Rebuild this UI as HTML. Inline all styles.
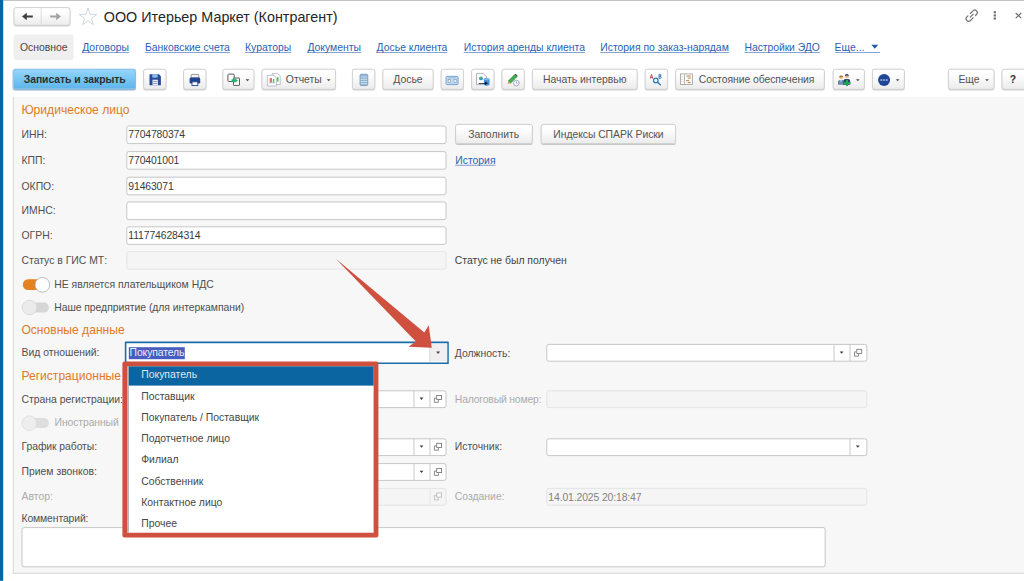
<!DOCTYPE html>
<html lang="ru">
<head>
<meta charset="utf-8">
<title>ООО Итерьер Маркет (Контрагент)</title>
<style>
html,body{margin:0;padding:0;}
body{width:1024px;height:581px;overflow:hidden;background:#fff;position:relative;font-family:"Liberation Sans",sans-serif;font-size:13px;color:#4a4a4a;}
#root{position:absolute;left:0;top:0;width:1280px;height:726.25px;transform:scale(0.8);transform-origin:0 0;}
.abs{position:absolute;white-space:nowrap;}
#stripe{left:0;top:0;width:4.125px;height:726.25px;background:#0b65a1;}
#topline{left:0;top:0;width:1280px;height:1.25px;background:#b4b4b4;}
#title{left:129.75px;top:10.5px;font-size:17.938px;color:#262626;line-height:22.5px;}
.btn{position:absolute;box-sizing:border-box;border:1.25px solid #c3c3c3;border-radius:3.125px;background:linear-gradient(#ffffff 20%,#ececec);box-shadow:0 1.125px 0.625px rgba(0,0,0,.2);text-align:center;white-space:nowrap;color:#535353;font-size:13px;}
.tb{top:85.75px;height:26.5px;line-height:26.25px;}
.tab{top:51.5px;font-size:13px;line-height:16.25px;color:#2c5fb4;text-decoration:underline;text-decoration-thickness:1px;text-underline-offset:1px;text-decoration-skip-ink:none;text-decoration-color:rgba(44,95,180,.72);}
#panel{left:15.875px;top:121.375px;width:1275px;height:595.625px;background:#f7f7f7;border:1.375px solid #d0d0d0;border-top:none;box-sizing:border-box;}
.lbl{font-size:13px;line-height:16.25px;color:#4f4f4f;}
.dis{color:#ababab;}
.hdr{font-size:15.125px;line-height:18.75px;color:#df7a22;}
.inp{position:absolute;box-sizing:border-box;border:1.25px solid #b9b9b9;border-radius:3px;background:#fff;font-size:13px;line-height:22.75px;color:#3a3a3a;padding-left:1.5px;white-space:nowrap;overflow:hidden;letter-spacing:-0.15px;}
.inpd{background:#f5f5f5;border-color:#dfdfdf;color:#828282;}
.h{height:22.875px;}
.link{color:#2c5fb4;text-decoration:underline;text-decoration-thickness:1px;text-underline-offset:1px;text-decoration-skip-ink:none;text-decoration-color:rgba(44,95,180,.72);}
.item{position:absolute;left:176.5px;font-size:13px;line-height:16.25px;color:#464646;white-space:nowrap;}
.sep{position:absolute;width:1.25px;background:#bcbcbc;}
</style>
</head>
<body>
<div id="root">
<div class="abs" id="topline"></div>
<div class="abs" id="stripe"></div>

<!-- header -->
<div class="btn" style="left:16.5px;top:9px;width:71px;height:22.75px;"></div>
<div class="abs" style="left:51.125px;top:10.25px;width:1.25px;height:20.25px;background:#d6d6d6;"></div>
<div class="abs" id="title">ООО Итерьер Маркет (Контрагент)</div>

<!-- tabs -->
<div class="abs" style="left:16.5px;top:42.75px;width:75.75px;height:31.75px;background:#efefef;border-radius:3.125px;"></div>
<div class="abs tab" style="left:25px;color:#474747;text-decoration:none;">Основное</div>
<div class="abs tab" style="left:102.75px;">Договоры</div>
<div class="abs tab" style="left:181.25px;">Банковские счета</div>
<div class="abs tab" style="left:306.25px;">Кураторы</div>
<div class="abs tab" style="left:384.25px;">Документы</div>
<div class="abs tab" style="left:470.75px;">Досье клиента</div>
<div class="abs tab" style="left:579.625px;">История аренды клиента</div>
<div class="abs tab" style="left:750.25px;">История по заказ-нарядам</div>
<div class="abs tab" style="left:930.625px;"><span style="letter-spacing:-0.088px">Настройки ЭДО</span></div>
<div class="abs tab" style="left:1043.25px;text-decoration:none;">Еще...</div>
<div class="abs" style="left:1043.5px;top:65px;width:56.75px;height:1px;background:rgba(44,95,180,.72);"></div>

<!-- toolbar -->
<div class="btn tb" style="left:16.375px;width:154px;background:linear-gradient(#93d6fc,#5db4ea);border-color:#5fa6d6;box-shadow:0 1.125px 0.625px rgba(20,70,120,.45);color:#2e2e2e;font-weight:bold;"><span style="letter-spacing:-0.075px">Записать и закрыть</span></div>
<div class="btn tb" style="left:179.125px;width:29.25px;"></div>
<div class="btn tb" style="left:228.5px;width:29.25px;"></div>
<div class="btn tb" style="left:277.875px;width:40.25px;"></div>
<div class="btn tb" style="left:327px;width:93px;text-align:left;padding-left:29.25px;">Отчеты</div>
<div class="btn tb" style="left:439.875px;width:29.25px;"></div>
<div class="btn tb" style="left:478px;width:63.875px;">Досье</div>
<div class="btn tb" style="left:550.625px;width:29.25px;"></div>
<div class="btn tb" style="left:588.875px;width:29.25px;"></div>
<div class="btn tb" style="left:626.75px;width:29.25px;"></div>
<div class="btn tb" style="left:665.25px;width:131.375px;">Начать интервью</div>
<div class="btn tb" style="left:805.75px;width:29px;"></div>
<div class="btn tb" style="left:843.875px;width:187.5px;text-align:left;padding-left:28.625px;"><span style="letter-spacing:-0.075px">Состояние обеспечения</span></div>
<div class="btn tb" style="left:1040.5px;width:40.75px;"></div>
<div class="btn tb" style="left:1090.25px;width:40.75px;"></div>
<div class="btn tb" style="left:1185px;width:58px;text-align:left;padding-left:12px;">Еще</div>
<div class="btn tb" style="left:1252px;width:37.5px;text-align:left;padding-left:9.25px;font-weight:bold;color:#333;">?</div>

<!-- form panel -->
<div class="abs" id="panel"></div>

<div class="abs hdr" style="left:26.75px;top:129.125px;">Юридическое лицо</div>

<div class="abs lbl" style="left:26.875px;top:160.75px;">ИНН:</div>
<div class="inp h" style="left:157.875px;top:156.625px;width:400.5px;">7704780374</div>
<div class="btn" style="left:568.5px;top:154.875px;width:97.25px;height:25.25px;line-height:23px;">Заполнить</div>
<div class="btn" style="left:676px;top:154.875px;width:169.125px;height:25.25px;line-height:23px;letter-spacing:-0.075px;">Индексы СПАРК Риски</div>

<div class="abs lbl" style="left:26.875px;top:193.25px;">КПП:</div>
<div class="inp h" style="left:157.875px;top:189.25px;width:400.5px;">770401001</div>
<div class="abs lbl link" style="left:569px;top:193.25px;">История</div>

<div class="abs lbl" style="left:26.875px;top:224.75px;">ОКПО:</div>
<div class="inp h" style="left:157.875px;top:220.75px;width:400.5px;">91463071</div>

<div class="abs lbl" style="left:26.875px;top:255.75px;">ИМНС:</div>
<div class="inp h" style="left:157.875px;top:251.75px;width:400.5px;"></div>

<div class="abs lbl" style="left:26.875px;top:287.25px;">ОГРН:</div>
<div class="inp h" style="left:157.875px;top:283.25px;width:400.5px;">1117746284314</div>

<div class="abs lbl" style="left:26.875px;top:318.25px;">Статус в ГИС МТ:</div>
<div class="inp inpd h" style="left:157.875px;top:314.25px;width:400.5px;"></div>
<div class="abs lbl" style="left:568.5px;top:318.25px;color:#424242;">Статус не был получен</div>

<!-- toggles -->
<div class="abs lbl" style="left:67.75px;top:348px;">НЕ является плательщиком НДС</div>

<div class="abs lbl" style="left:67.75px;top:376.75px;"><span style="letter-spacing:-0.056px">Наше предприятие (для интеркампани)</span></div>

<div class="abs hdr" style="left:26.75px;top:403.875px;">Основные данные</div>

<div class="abs lbl" style="left:26.875px;top:433.375px;">Вид отношений:</div>
<div class="inp" style="left:155.875px;top:427.125px;width:404.875px;height:27.375px;border:2.375px solid #1b6da7;border-radius:0.75px;padding-left:0;"></div>
<div class="abs" style="left:536.875px;top:429.875px;width:1.375px;height:22.5px;background:#b9b9b9;"></div>
<div class="abs" style="left:538.25px;top:429.875px;width:20.375px;height:22.5px;background:#efefef;"></div>
<div class="abs" style="left:161.25px;top:433.75px;width:69.5px;height:15.375px;background:#465ec0;"></div>
<div class="abs lbl" style="left:161.875px;top:433.375px;color:rgba(255,255,255,.9);letter-spacing:-0.125px;">Покупатель</div>

<div class="abs lbl" style="left:568.5px;top:433.625px;">Должность:</div>
<div class="inp h" style="left:682.875px;top:430px;width:400.75px;height:22.25px;"></div>
<div class="sep" style="left:1041.75px;top:431.25px;height:19.75px;"></div>
<div class="sep" style="left:1062px;top:431.25px;height:19.75px;"></div>

<div class="abs hdr" style="left:26.75px;top:461.125px;">Регистрационные</div>

<div class="abs lbl" style="left:26.875px;top:491.5px;">Страна регистрации:</div>
<div class="inp h" style="left:157.875px;top:487.75px;width:400.5px;height:22.25px;"></div>
<div class="sep" style="left:516.625px;top:489px;height:19.75px;"></div>
<div class="sep" style="left:537px;top:489px;height:19.75px;"></div>
<div class="abs lbl dis" style="left:568.5px;top:491.5px;"><span style="letter-spacing:-0.225px">Налоговый номер:</span></div>
<div class="inp inpd h" style="left:682.875px;top:487.75px;width:400.75px;height:22.25px;"></div>

<div class="abs lbl dis" style="left:68.25px;top:520.5px;letter-spacing:-0.15px;">Иностранный</div>

<div class="abs lbl" style="left:26.875px;top:551.375px;"><span style="letter-spacing:-0.1px">График работы:</span></div>
<div class="inp h" style="left:157.875px;top:547.625px;width:400.5px;height:22.25px;"></div>
<div class="sep" style="left:516.625px;top:548.875px;height:19.75px;"></div>
<div class="sep" style="left:537px;top:548.875px;height:19.75px;"></div>
<div class="abs lbl" style="left:568.5px;top:551.375px;">Источник:</div>
<div class="inp h" style="left:682.875px;top:547.625px;width:400.75px;height:22.25px;"></div>
<div class="sep" style="left:1062px;top:548.875px;height:19.75px;"></div>

<div class="abs lbl" style="left:26.875px;top:582px;">Прием звонков:</div>
<div class="inp h" style="left:157.875px;top:579.125px;width:400.5px;height:22.25px;"></div>
<div class="sep" style="left:516.625px;top:580.375px;height:19.75px;"></div>
<div class="sep" style="left:537px;top:580.375px;height:19.75px;"></div>

<div class="abs lbl dis" style="left:26.875px;top:613.25px;">Автор:</div>
<div class="inp inpd h" style="left:157.875px;top:609.75px;width:400.5px;height:22.5px;"></div>
<div class="sep" style="left:537px;top:611px;height:20px;background:#e0e0e0;"></div>
<div class="abs lbl dis" style="left:568.5px;top:613.25px;">Создание:</div>
<div class="inp inpd h" style="left:682.875px;top:609.75px;width:400.75px;height:22.5px;line-height:22.75px;">14.01.2025 20:18:47</div>

<div class="abs lbl" style="left:26.875px;top:641.125px;"><span style="letter-spacing:-0.163px">Комментарий:</span></div>
<div class="inp" style="left:26.875px;top:658.75px;width:1005.25px;height:50.25px;"></div>

<!-- dropdown list -->
<div class="abs" style="left:152.875px;top:452.125px;width:320.25px;height:220.25px;box-sizing:border-box;border:6.125px solid #d0503f;border-radius:2.5px;background:#fff;"></div>
<div class="abs" style="left:159.25px;top:458.25px;width:1.5px;height:208px;background:#a9a9a9;"></div>
<div class="abs" style="left:160.75px;top:458.25px;width:306.25px;height:24px;background:#0b65a1;"></div>
<div class="item" style="top:461px;color:rgba(255,255,255,.88);">Покупатель</div>
<div class="item" style="top:487.5px;">Поставщик</div>
<div class="item" style="top:514px;">Покупатель / Поставщик</div>
<div class="item" style="top:540.5px;">Подотчетное лицо</div>
<div class="item" style="top:567px;">Филиал</div>
<div class="item" style="top:593.5px;">Собственник</div>
<div class="item" style="top:620px;">Контактное лицо</div>
<div class="item" style="top:646.5px;">Прочее</div>

<!-- ICONS + red arrow (page-space SVG overlay) -->
<svg class="abs" id="ov" style="left:0;top:0;width:1280px;height:726.25px;pointer-events:none" viewBox="0 0 1024 581">
<!--ICONS-->
  <!-- toggles -->
  <rect x="22.8" y="279.3" width="26" height="10.7" rx="5.35" fill="#e5811f"/>
  <circle cx="42.4" cy="284.8" r="7.35" fill="#fff" stroke="#a7adab" stroke-width="0.8"/>
  <rect x="23" y="302.6" width="25.9" height="10" rx="5" fill="#d6d6d6"/>
  <circle cx="29.55" cy="307.5" r="7.3" fill="#ebebeb" stroke="#d5d5d5" stroke-width="0.8"/>
  <rect x="23" y="418.1" width="25.9" height="9.9" rx="4.95" fill="#dedede"/>
  <circle cx="29.3" cy="423.2" r="7.3" fill="#eeeeee" stroke="#dcdcdc" stroke-width="0.8"/>
  <!-- nav arrows -->
  <path d="M22 16.5 L26.8 12.7 L26.8 15.6 L32.8 15.6 L32.8 17.5 L26.8 17.5 L26.8 20.3 Z" fill="#3f3f3f"/>
  <path d="M61 16.5 L56.2 12.7 L56.2 15.6 L50.2 15.6 L50.2 17.5 L56.2 17.5 L56.2 20.3 Z" fill="#a3a3a3"/>
  <!-- star -->
  <path d="M88 8.1 L90.15 14.3 L96.9 14.4 L91.5 18.4 L93.5 24.7 L88 20.9 L82.5 24.7 L84.5 18.4 L79.1 14.4 L85.85 14.3 Z" fill="#fff" stroke="#c6cdd7" stroke-width="0.85" stroke-linejoin="miter"/>
  <!-- header right: link, dots, close -->
  <g fill="none" stroke="#767676" stroke-width="1.2" stroke-linecap="round" transform="translate(971.7 15.7) rotate(-45)">
    <path d="M0.6 -2.55 H4.3 A2.55 2.55 0 0 1 4.3 2.55 H2.8"/>
    <path d="M-0.6 2.55 H-4.3 A2.55 2.55 0 0 1 -4.3 -2.55 H-2.8"/>
    <path d="M-2.1 0 H2.1"/>
  </g>
  <g fill="#6a6a6a"><rect x="993.7" y="11.2" width="2.2" height="2.1"/><rect x="993.7" y="14.4" width="2.2" height="2.1"/><rect x="993.7" y="17.5" width="2.2" height="2.1"/></g>
  <path d="M1015.7 13 L1021.2 18.2 M1021.2 13 L1015.7 18.2" stroke="#6a6a6a" stroke-width="1.15" fill="none"/>
  <!-- tabs 'Еще' triangle -->
  <path d="M871.4 44.8 L878.2 44.8 L874.8 48.7 Z" fill="#2556b0"/>

  <!-- save (floppy) -->
  <path d="M149.5 74.3 H159 L160.9 76.2 V85.3 H149.5 Z" fill="#264a9c"/>
  <rect x="152.3" y="74.3" width="5.3" height="3.3" fill="#8fc0ea"/>
  <rect x="152.5" y="79.7" width="5.4" height="5.6" fill="#e9edf5"/>
  <rect x="153.2" y="81" width="4" height="0.9" fill="#8a97b8"/><rect x="153.2" y="83" width="4" height="0.9" fill="#8a97b8"/>
  <!-- print -->
  <rect x="191.2" y="74.4" width="7.5" height="3.6" rx="0.8" fill="#f2f2f2" stroke="#8b8b8b" stroke-width="0.9"/>
  <rect x="189.6" y="77.6" width="10.6" height="6" rx="1.4" fill="#1f4391"/>
  <rect x="192" y="81.8" width="5.8" height="3.8" fill="#fff" stroke="#1f4391" stroke-width="0.9"/>
  <!-- copy w/ green arrow -->
  <rect x="227.9" y="74.1" width="6.3" height="7.4" rx="0.8" fill="none" stroke="#5a5a5a" stroke-width="1"/>
  <rect x="233.5" y="78" width="6" height="7.4" rx="0.5" fill="#fff" stroke="#5a5a5a" stroke-width="1"/>
  <path d="M231.6 79.2 H234.6 V77.9 L237.9 80.5 L234.6 83.1 V81.8 H231.6 Z" fill="#1fb866"/>
  <path d="M245.6 79.2 H249.3 L247.45 81.3 Z" fill="#4a4a4a"/>
  <!-- reports -->
  <path d="M272.3 73.6 H277.8 L280.2 76 V84.6 H272.3 Z" fill="#fff" stroke="#a9b4c2" stroke-width="0.8"/>
  <rect x="277" y="77.2" width="1.5" height="4.4" fill="#5cb85c"/>
  <path d="M267.4 75.3 H273.8 L276.4 77.8 V86 H267.4 Z" fill="#fff" stroke="#a9b4c2" stroke-width="0.8"/>
  <rect x="269.6" y="78" width="2.4" height="4.6" fill="#e8746a"/>
  <rect x="272.8" y="79" width="1.5" height="3.6" fill="#5cb85c"/>
  <rect x="268.8" y="82.6" width="6.2" height="0.6" fill="#9aa4b2"/>
  <path d="M326.8 79.2 H330.5 L328.65 81.3 Z" fill="#4a4a4a"/>
  <!-- list icon -->
  <rect x="360" y="74.2" width="7.8" height="11.4" rx="1.4" fill="#92b4d2" stroke="#6f97ba" stroke-width="0.8"/>
  <g fill="#d9e6f2"><rect x="360.6" y="76.6" width="6.6" height="0.8"/><rect x="360.6" y="78.9" width="6.6" height="0.8"/><rect x="360.6" y="81.1" width="6.6" height="0.8"/><rect x="360.6" y="83.3" width="6.6" height="0.8"/></g>
  <!-- tape -->
  <rect x="446.1" y="76.4" width="12" height="8.2" rx="1" fill="#bddaf4" stroke="#6b9fd8" stroke-width="0.9"/>
  <rect x="448.2" y="77.4" width="7.8" height="0.8" fill="#9fb9d6"/>
  <rect x="448.2" y="79.6" width="2.2" height="2.8" fill="#f4f8fc" stroke="#8a98a8" stroke-width="0.6"/>
  <rect x="454" y="79.6" width="2.2" height="2.8" fill="#f4f8fc" stroke="#8a98a8" stroke-width="0.6"/>
  <!-- doc -> db -->
  <path d="M476.5 73.7 H483.4 L486.4 76.6 V84.6 H476.5 Z" fill="#fff" stroke="#98a2b0" stroke-width="0.8"/>
  <circle cx="481" cy="78.4" r="1.9" fill="#3f8fd8"/><circle cx="480.4" cy="78" r="0.9" fill="#4fbf6a"/>
  <path d="M483.9 79.3 a2.8 1.1 0 0 1 5.6 0 V84.6 a2.8 1.1 0 0 1 -5.6 0 Z" fill="#3b8bd6"/>
  <ellipse cx="486.7" cy="79.3" rx="2.8" ry="1.1" fill="#7db8ea"/>
  <path d="M478.7 82.9 H485 V81.5 L487.8 83.3 L485 85.1 V83.7 H478.7 Z" fill="#111"/>
  <!-- pencil + clock -->
  <path d="M514.6 74.6 L517 76.8 L510.6 83.2 L508.2 81 Z" fill="#3fae54" stroke="#2e7d3c" stroke-width="0.5"/>
  <path d="M514.6 74.6 L515.5 73.8 L517.9 76 L517 76.8 Z" fill="#4a4f55"/>
  <path d="M508.2 81 L510.6 83.2 L507.6 84 Z" fill="#d9a45a"/>
  <circle cx="516.4" cy="83.1" r="2.8" fill="#fff" stroke="#8497b0" stroke-width="0.8"/>
  <path d="M516.4 81.5 V83.1 H517.8" fill="none" stroke="#5a6a80" stroke-width="0.6"/>
  <!-- AB search -->
  <path d="M650.2 78.6 L651.5 74.5 L652.8 78.6 M650.7 77.3 H652.3" fill="none" stroke="#c63a3a" stroke-width="0.9"/>
  <path d="M659 74.4 V78.3 H660.2 a1 1 0 0 0 0 -2 H659 M660 76.3 a0.95 0.95 0 0 0 0 -1.9 H659" fill="none" stroke="#2a6fb5" stroke-width="0.9"/>
  <circle cx="655.8" cy="80.4" r="2.3" fill="none" stroke="#2b7ab9" stroke-width="1.2"/>
  <path d="M657.5 82.2 L660.4 84.7" stroke="#2b7ab9" stroke-width="1.4" stroke-linecap="round"/>
  <!-- state of supply -->
  <rect x="680.5" y="73.9" width="12" height="10.6" fill="#fbfbfb" stroke="#9d9d9d" stroke-width="0.8"/>
  <rect x="684" y="74.2" width="0.8" height="10" fill="#a8a8a8"/>
  <g fill="#dcdcdc"><rect x="681" y="76.6" width="3" height="0.6"/><rect x="681" y="79" width="3" height="0.6"/><rect x="681" y="81.4" width="3" height="0.6"/></g>
  <g fill="#c48f58"><rect x="686.3" y="75.5" width="4.4" height="1.1"/><rect x="687.8" y="77.6" width="3" height="1.1"/><rect x="686" y="80.1" width="3.3" height="1.1"/><rect x="687.8" y="82" width="3" height="1.1"/></g>
  <!-- people + -->
  <path d="M838 84.8 V82 a2 2 0 0 1 2 -2 H842.4 a2 2 0 0 1 2 2 V84.8 Z" fill="#5f89b2"/>
  <path d="M840.5 80 L841.2 84.8 L841.9 80 Z" fill="#fff"/><rect x="840.95" y="80.6" width="0.6" height="3.6" fill="#d8453a"/>
  <circle cx="841.1" cy="77.5" r="1.8" fill="#ecbc84"/><path d="M839.2 77.3 a1.9 1.9 0 0 1 3.8 0 q-1.9 -1 -3.8 0Z" fill="#8a5a2a"/>
  <path d="M843.4 84.8 V81.2 a2.2 2.2 0 0 1 2.2 -2.2 H848 a2.2 2.2 0 0 1 2.2 2.2 V84.8 Z" fill="#2b3b7a"/>
  <circle cx="846.8" cy="76.3" r="1.9" fill="#e9b880"/><path d="M844.8 76.1 a2 2 0 0 1 4 0 q-2 -1.1 -4 0Z" fill="#3a3560"/>
  <path d="M846 79.7 H848 V81.9 H850.4 V83.9 H848 V86.1 H846 V83.9 H843.7 V81.9 H846 Z" fill="#1eaa4a"/>
  <path d="M856 79.2 H859.7 L857.85 81.3 Z" fill="#4a4a4a"/>
  <!-- circle with dots -->
  <circle cx="884.05" cy="80" r="6" fill="#1f4697"/>
  <g fill="#b9c8e6"><rect x="880.5" y="79.3" width="1.7" height="1.5"/><rect x="883.2" y="79.3" width="1.7" height="1.5"/><rect x="885.9" y="79.3" width="1.7" height="1.5"/></g>
  <path d="M895.8 79.2 H899.5 L897.65 81.3 Z" fill="#4a4a4a"/>
  <!-- 'Еще' arrow -->
  <path d="M985.2 79.2 H988.9 L987.05 81.3 Z" fill="#4a4a4a"/>

  <!-- field arrows + open icons -->
  <path d="M436.1 351.6 H440.1 L438.1 353.9 Z" fill="#3f3f3f"/>
  <g id="sel1"><path d="M419.6 397.6 H423.4 L421.5 399.9 Z" fill="#3a3a3a"/></g>
  <g id="opn1" fill="none" stroke="#6e6e6e" stroke-width="0.8"><rect x="436.7" y="395.4" width="4.9" height="4.1" fill="#fff"/><path d="M436.2 398 H434.4 V402.3 H438.4 V400"/></g>
  <use href="#sel1" y="47.9"/><use href="#opn1" y="47.9"/>
  <use href="#sel1" y="73.1"/><use href="#opn1" y="73.1"/>
  <use href="#opn1" y="97.6" opacity="0.45"/>
  <use href="#sel1" x="420.1" y="-46.1"/><use href="#opn1" x="420.1" y="-46.1"/>
  <use href="#sel1" x="436.3" y="47.9"/>
  <path d="M335.8 258.7 L424.3 332.5 L428.7 325.3 L431.8 347.7 L408.6 346.7 L415.8 341.5 Z" fill="#d0503f"/>
</svg>
</div>
</body>
</html>
